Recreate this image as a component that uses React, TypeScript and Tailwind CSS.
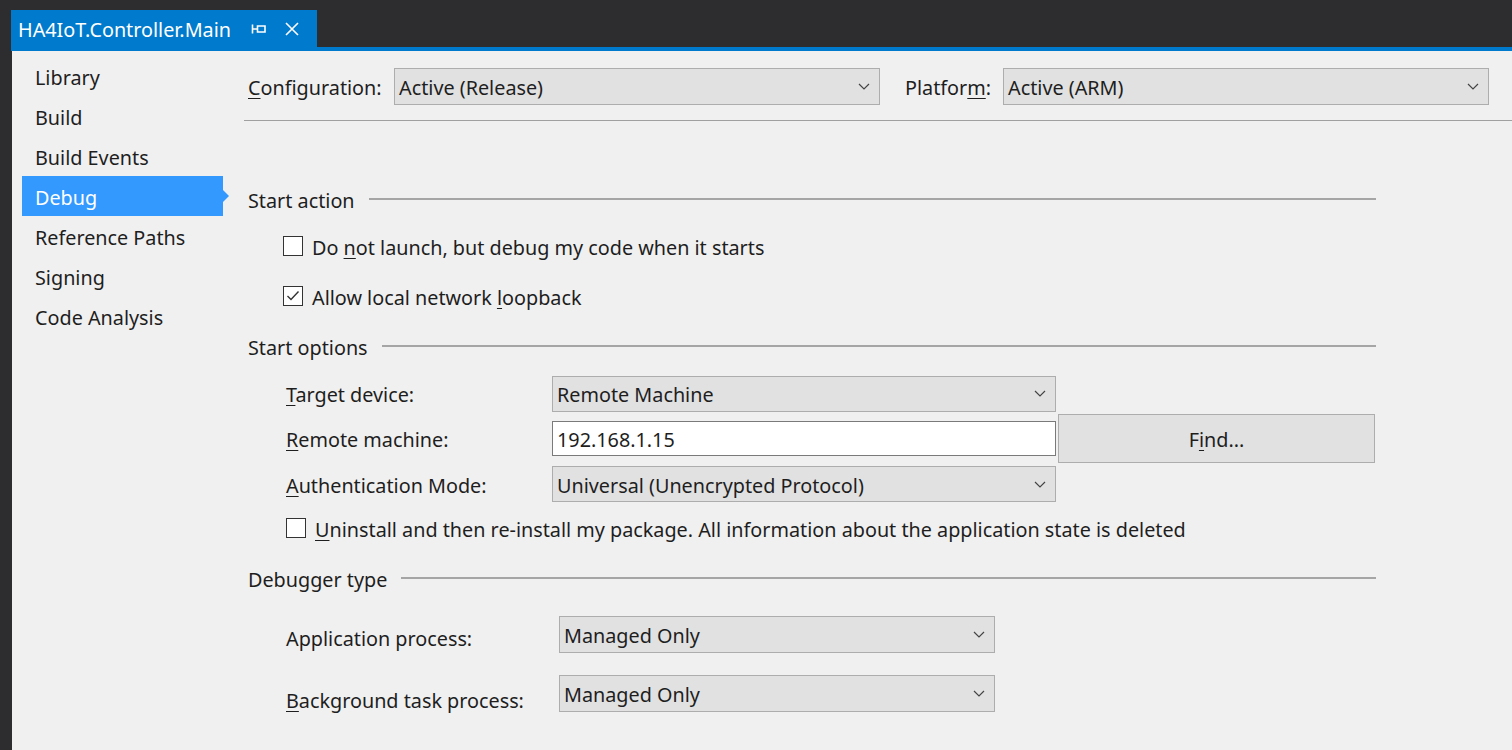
import React from "react"

const font = { fontFamily: '"Segoe UI", "Noto Sans", "Open Sans", sans-serif' }

const sideItems = ["Library", "Build", "Build Events", "Debug", "Reference Paths", "Signing", "Code Analysis"]

// underline the access key letter
const Key = ({ children }: { children: React.ReactNode }) => (
  <span className="underline decoration-1 underline-offset-[3px]">{children}</span>
)

const Chevron = () => (
  <svg width="12" height="7" viewBox="0 0 12 7" className="shrink-0">
    <path d="M1 1 L6 6 L11 1" fill="none" stroke="#444" strokeWidth="1.2" />
  </svg>
)

const Select = ({ value, className }: { value: string; className: string }) => (
  <div className={"flex items-center justify-between bg-[#e1e1e1] border border-[#adadad] pl-[4px] pr-[9px] " + className}>
    <span className="pt-[3px]">{value}</span>
    <Chevron />
  </div>
)

const Checkbox = ({ checked }: { checked?: boolean }) => (
  <div className="w-[20px] h-[20px] border border-[#333] bg-white flex items-center justify-center shrink-0">
    {checked && (
      <svg width="14" height="12" viewBox="0 0 14 12">
        <path d="M1.5 6 L5 9.5 L12.5 1.5" fill="none" stroke="#333" strokeWidth="1.4" />
      </svg>
    )}
  </div>
)

const SectionHeader = ({ title, className }: { title: string; className: string }) => (
  <div className={"flex items-center w-[1128px] " + className}>
    <span className="pt-[3px]">{title}</span>
    <div className="flex-1 h-[2px] bg-[#a5a5a5] ml-[14px]"></div>
  </div>
)

export default function App() {
  return (
    <div className="w-[1512px] h-[750px] bg-[#2d2d30] flex flex-col overflow-hidden text-[19.8px] text-[#1e1e1e]" style={font}>
      {/* document tab */}
      <div className="h-[47px] pt-[10px] pl-[11px] flex shrink-0">
        <div className="w-[306px] h-[37px] bg-[#007acc] flex items-center pl-[7px] text-white">
          <span className="leading-none pt-[2px]">HA4IoT.Controller.Main</span>
          <svg width="18" height="16" viewBox="0 0 18 16" className="ml-[19px]">
            <path d="M2.5 3.5 V12.5 M2.5 8 H7.5 M7.5 5 H15 V11 H7.5 Z" fill="none" stroke="#fff" strokeWidth="1.6" />
          </svg>
          <svg width="16" height="16" viewBox="0 0 16 16" className="ml-[16px]">
            <path d="M2 2 L14 14 M14 2 L2 14" fill="none" stroke="#fff" strokeWidth="1.6" />
          </svg>
        </div>
      </div>
      <div className="h-[4px] bg-[#007acc] ml-[11px] shrink-0"></div>

      <div className="flex flex-1 pl-[12px]">
        <div className="flex flex-1 bg-[#f0f0f0]">
          {/* left nav */}
          <div className="w-[232px] pt-[5px] shrink-0">
            {sideItems.map((item) => (
              <div key={item} className="h-[40px] flex items-center">
                {item === "Debug" ? (
                  <div className="ml-[10px] w-[201px] h-[40px] bg-[#3399ff] text-white flex items-center pl-[13px] pt-[3px] relative">
                    {item}
                    <div className="absolute right-[-6px] top-[14px] w-0 h-0 border-y-[6px] border-y-transparent border-l-[6px] border-l-[#3399ff]"></div>
                  </div>
                ) : (
                  <span className="pl-[23px] pt-[3px]">{item}</span>
                )}
              </div>
            ))}
          </div>

          {/* property page */}
          <div className="flex-1 flex flex-col">
            <div className="flex items-center pt-[17px] pb-[15px] pl-[4px] border-b border-[#a0a0a0]">
              <span className="w-[146px] pt-[3px]"><Key>C</Key>onfiguration:</span>
              <Select value="Active (Release)" className="w-[486px] h-[37px]" />
              <span className="w-[123px] pl-[25px] pt-[3px]">Platfor<Key>m</Key>:</span>
              <Select value="Active (ARM)" className="w-[486px] h-[37px]" />
            </div>

            <div className="pl-[4px] pt-[58px] flex flex-col">
              <SectionHeader title="Start action" className="h-[40px]" />
              <div className="h-[54px] flex items-center pl-[35px]">
                <Checkbox />
                <span className="ml-[9px] pt-[3px]">Do <Key>n</Key>ot launch, but debug my code when it starts</span>
              </div>
              <div className="h-[46px] flex items-center pl-[35px]">
                <Checkbox checked />
                <span className="ml-[9px] pt-[3px]">Allow local network <Key>l</Key>oopback</span>
              </div>

              <SectionHeader title="Start options" className="h-[54px]" />
              <div className="h-[41px] flex items-center pl-[38px]">
                <span className="w-[266px] pt-[3px]"><Key>T</Key>arget device:</span>
                <Select value="Remote Machine" className="w-[504px] h-[36px]" />
              </div>
              <div className="h-[49px] flex items-center pl-[38px]">
                <span className="w-[266px] pt-[3px]"><Key>R</Key>emote machine:</span>
                <div className="w-[504px] h-[35px] bg-white border border-[#7a7a7a] flex items-center pl-[4px] pt-[3px]">192.168.1.15</div>
                <div className="ml-[2px] w-[317px] h-[49px] bg-[#e1e1e1] border border-[#adadad] flex items-center justify-center">
                  <span className="pt-[3px]">F<Key>i</Key>nd...</span>
                </div>
              </div>
              <div className="h-[42px] flex items-center pl-[38px]">
                <span className="w-[266px] pt-[3px]"><Key>A</Key>uthentication Mode:</span>
                <Select value="Universal (Unencrypted Protocol)" className="w-[504px] h-[36px]" />
              </div>
              <div className="h-[46px] flex items-center pl-[38px]">
                <Checkbox />
                <span className="ml-[9px] pt-[3px]"><Key>U</Key>ninstall and then re-install my package. All information about the application state is deleted</span>
              </div>

              <SectionHeader title="Debugger type" className="h-[54px]" />
              <div className="h-[58px] flex items-center pl-[38px]">
                <span className="w-[273px] mt-[10px]">Application process:</span>
                <Select value="Managed Only" className="w-[436px] h-[37px]" />
              </div>
              <div className="h-[61px] flex items-center pl-[38px]">
                <span className="w-[273px] mt-[14px]"><Key>B</Key>ackground task process:</span>
                <Select value="Managed Only" className="w-[436px] h-[37px]" />
              </div>
            </div>
          </div>
        </div>
      </div>
    </div>
  )
}
